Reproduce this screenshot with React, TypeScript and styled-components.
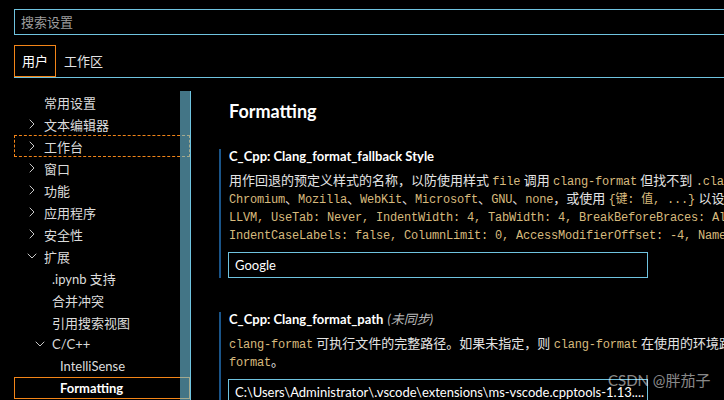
import React from 'react'
import styled, { createGlobalStyle } from 'styled-components'
import { ChevronRight, ChevronDown } from 'lucide-react'

const GlobalStyle = createGlobalStyle`
    html, body {
        margin: 0;
        padding: 0;
        background: #000;
    }
    body {
        font-family: "Lato", "Noto Sans CJK SC", sans-serif;
        font-size: 13px;
        color: #e4e4e4;
    }
`

const Page = styled.div`
    width: 724px;
    height: 400px;
    overflow: hidden;
    position: relative;
    background: #000;
`

const Header = styled.div`
    padding: 9px 0 0 14px;
`

const SearchBox = styled.div`
    height: 26px;
    box-sizing: border-box;
    border: 1px solid #6fc3df;
    border-right: none;
    padding-left: 6px;
    line-height: 24px;
    color: #9d9d9d;
`

const TabBar = styled.div`
    display: flex;
    margin-top: 10px;
    height: 33px;
    box-sizing: border-box;
    border-bottom: 1px solid #6fc3df;
`

const Tab = styled.div<{ $active?: boolean }>`
    height: 32px;
    box-sizing: border-box;
    padding: 0 7px;
    line-height: 30px;
    border: 1px solid ${p => (p.$active ? '#f38518' : 'transparent')};
    color: ${p => (p.$active ? '#fff' : '#e4e4e4')};
`

const Body = styled.div`
    display: flex;
    margin-top: 13px;
    height: 309px;
`

const TreePanel = styled.div`
    position: relative;
    width: 191px;
    flex: none;
    box-sizing: border-box;
    padding-left: 14px;
    border-right: 1px solid #6fc3df;
`

const Scrollbar = styled.div`
    position: absolute;
    top: 0;
    bottom: 0;
    right: 0;
    width: 10px;
    background: rgba(111, 195, 223, 0.6);
`

const TreeRow = styled.div<{ $level: number; $state?: 'focus' | 'selected' }>`
    display: flex;
    align-items: center;
    height: 22px;
    box-sizing: border-box;
    padding-left: ${p => 9 + (p.$level - 1) * 8}px;
    border: 1px ${p => (p.$state === 'focus' ? 'dashed' : 'solid')}
        ${p => (p.$state ? '#f38518' : 'transparent')};
    color: ${p => (p.$state === 'selected' ? '#fff' : '#dcdcdc')};
    font-weight: ${p => (p.$state === 'selected' ? 700 : 400)};
    white-space: nowrap;
`

const Twistie = styled.span`
    width: 16px;
    height: 16px;
    margin-right: 4px;
    flex: none;
    display: flex;
    align-items: center;
    justify-content: center;
    color: #c8c8c8;
`

const Content = styled.div`
    flex: 1;
    min-width: 0;
    padding: 8px 0 0 28px;
    overflow: hidden;
`

const GroupTitle = styled.div`
    padding-left: 10px;
    font-size: 18px;
    font-weight: 700;
    line-height: 24px;
    color: #fff;
`

const Setting = styled.div<{ $gap: number }>`
    margin-top: ${p => p.$gap}px;
    border-left: 2px solid #1a5488;
    padding-left: 7px;
`

const SettingTitle = styled.div`
    height: 14px;
    line-height: 14px;
    padding-left: 1px;
    font-weight: 700;
    color: #fff;
    white-space: nowrap;
`

const Unsynced = styled.span`
    font-weight: 400;
    font-style: italic;
    color: #b8b8b8;
    margin-left: 4px;
`

const Desc = styled.div`
    margin-top: 8px;
    padding-left: 1px;
`

const DescLine = styled.div`
    height: 18px;
    line-height: 18px;
    white-space: nowrap;
`

const Code = styled.code`
    font-family: "Liberation Mono", "Noto Sans CJK SC", monospace;
    font-size: 12px;
    line-height: 1;
    letter-spacing: -0.2px;
    color: #d7ba7d;
`

const InputBox = styled.div`
    margin-top: 9px;
    width: 420px;
    height: 26px;
    box-sizing: border-box;
    border: 1px solid #6fc3df;
    padding: 0 6px;
    line-height: 24px;
    color: #fff;
    white-space: nowrap;
    overflow: hidden;
`

const Watermark = styled.div`
    position: absolute;
    left: 608px;
    top: 369px;
    font-size: 15px;
    color: rgba(255, 255, 255, 0.55);
    white-space: nowrap;
`

type Node = { label: string; level: number; twistie?: 'right' | 'down'; state?: 'focus' | 'selected' }

const tree: Node[] = [
    { label: '常用设置', level: 1 },
    { label: '文本编辑器', level: 1, twistie: 'right' },
    { label: '工作台', level: 1, twistie: 'right', state: 'focus' },
    { label: '窗口', level: 1, twistie: 'right' },
    { label: '功能', level: 1, twistie: 'right' },
    { label: '应用程序', level: 1, twistie: 'right' },
    { label: '安全性', level: 1, twistie: 'right' },
    { label: '扩展', level: 1, twistie: 'down' },
    { label: '.ipynb 支持', level: 2 },
    { label: '合并冲突', level: 2 },
    { label: '引用搜索视图', level: 2 },
    { label: 'C/C++', level: 2, twistie: 'down' },
    { label: 'IntelliSense', level: 3 },
    { label: 'Formatting', level: 3, state: 'selected' },
]

const App: React.FC = () => {
    return (
        <Page>
            <GlobalStyle />
            <Header>
                <SearchBox>搜索设置</SearchBox>
                <TabBar>
                    <Tab $active>用户</Tab>
                    <Tab>工作区</Tab>
                </TabBar>
            </Header>
            <Body>
                <TreePanel>
                    {tree.map(n => (
                        <TreeRow key={n.label} $level={n.level} $state={n.state}>
                            <Twistie>
                                {n.twistie === 'right' && <ChevronRight size={16} strokeWidth={1.5} />}
                                {n.twistie === 'down' && <ChevronDown size={16} strokeWidth={1.5} />}
                            </Twistie>
                            {n.label}
                        </TreeRow>
                    ))}
                    <Scrollbar />
                </TreePanel>
                <Content>
                    <GroupTitle>Formatting</GroupTitle>
                    <Setting $gap={26}>
                        <SettingTitle>C_Cpp: Clang_format_fallback Style</SettingTitle>
                        <Desc>
                            <DescLine>
                                用作回退的预定义样式的名称，以防使用样式 <Code>file</Code> 调用 <Code>clang-format</Code> 但找不到 <Code>.clang-format</Code> 文件。
                            </DescLine>
                            <DescLine>
                                <Code>Chromium</Code>、<Code>Mozilla</Code>、<Code>WebKit</Code>、<Code>Microsoft</Code>、<Code>GNU</Code>、<Code>none</Code>，或使用 <Code>{'{键: 值, ...}'}</Code> 以设置特定参数。
                            </DescLine>
                            <DescLine>
                                <Code>LLVM, UseTab: Never, IndentWidth: 4, TabWidth: 4, BreakBeforeBraces: Allman, AllowShortIfStatementsOnASingleLine: false,</Code>
                            </DescLine>
                            <DescLine>
                                <Code>IndentCaseLabels: false, ColumnLimit: 0, AccessModifierOffset: -4, NamespaceIndentation: All, FixNamespaceComments: false {'}'}</Code>
                            </DescLine>
                        </Desc>
                        <InputBox>Google</InputBox>
                    </Setting>
                    <Setting $gap={34}>
                        <SettingTitle>
                            C_Cpp: Clang_format_path<Unsynced>(未同步)</Unsynced>
                        </SettingTitle>
                        <Desc>
                            <DescLine>
                                <Code>clang-format</Code> 可执行文件的完整路径。如果未指定，则 <Code>clang-format</Code> 在使用的环境路径中可用。
                            </DescLine>
                            <DescLine>
                                <Code>format</Code>。
                            </DescLine>
                        </Desc>
                        <InputBox>C:\Users\Administrator\.vscode\extensions\ms-vscode.cpptools-1.13....</InputBox>
                    </Setting>
                </Content>
            </Body>
            <Watermark>CSDN @胖茄子</Watermark>
        </Page>
    )
}

export default App
